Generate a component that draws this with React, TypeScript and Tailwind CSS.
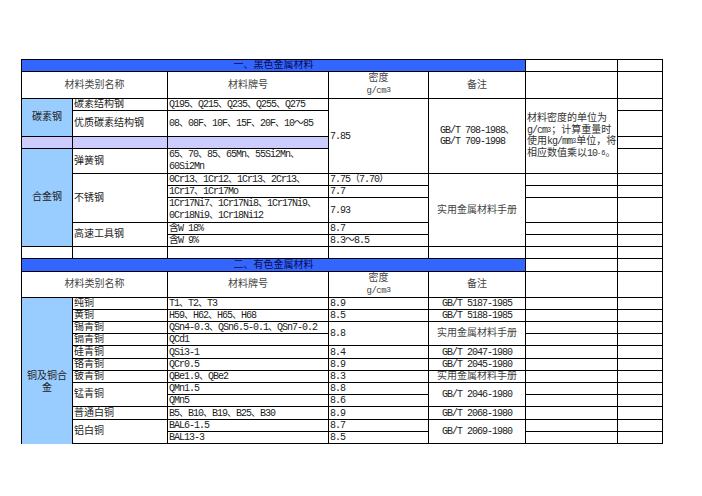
import React from "react";

const B = "border-r border-b border-black flex items-center overflow-hidden whitespace-nowrap";
const L = B + " justify-start pl-[1px]";
const LT = B + " justify-start pl-[1px] tracking-[-1px]";
const CT = B + " justify-center tracking-[-1px]";
const CC = B + " justify-center";
const E = "border-r border-b border-black";

function Header({ title }: { title: string }) {
  return (
    <>
      <div className={B + " col-span-5 justify-center bg-[#3366ff] text-[#0a0a50]"}>{title}</div>
      <div className={E}></div>
      <div className={E}></div>
      <div className={CC + " col-span-2 text-[#444]"}>材料类别名称</div>
      <div className={CC + " text-[#444]"}>材料牌号</div>
      <div className={B + " flex-col justify-center text-[#444] leading-[12px]"}>
        <span>密度</span>
        <span className="text-[9px] tracking-[-0.5px]">
          g/cm<sup className="text-[8px] relative -top-[1px]">3</sup>
        </span>
      </div>
      <div className={CC + " text-[#444]"}>备注</div>
      <div className={E}></div>
      <div className={E}></div>
    </>
  );
}

export default function App() {
  return (
    <div className="w-[702px] h-[496px] bg-white overflow-hidden">
      <div
        className="ml-[21px] mt-[59px] w-fit grid grid-cols-[51px_95px_161px_100px_97px_92px_45px] grid-rows-[12px_27px_12px_26px_12px_25px_12px_12px_25px_12px_12px_12px_13px_26px_12px_12px_12px_12px_13px_12px_12px_12px_12px_13px_12px_12px] border-t border-l border-black text-[10px] leading-[11px] text-[#222] font-[family-name:'Liberation_Mono','Noto_Sans_CJK_SC',monospace]"
      >
        <Header title="一、黑色金属材料" />

        {/* R3 */}
        <div className={CC + " row-span-2 bg-[#99ccff]"}>碳素钢</div>
        <div className={L}>碳素结构钢</div>
        <div className={LT}>Q195、Q215、Q235、Q255、Q275</div>
        <div className={LT + " row-span-4"}>7.85</div>
        <div className={B + " row-span-4 justify-center tracking-[-1px]"}>
          <div className="leading-[11px] text-left">
            <div>GB/T 708-1988、</div>
            <div>GB/T 709-1998</div>
          </div>
        </div>
        <div className={B + " row-span-4 justify-start pl-[1px] whitespace-normal"}>
          <div className="leading-[11.5px] text-[#333]">
            <div>材料密度的单位为</div>
            <div>
              <span className="tracking-[-1px]">g/cm</span>
              <sup className="text-[7px] relative -top-[1px]">3</sup>；计算重量时
            </div>
            <div>
              使用<span className="tracking-[-1px]">kg/mm</span>
              <sup className="text-[7px] relative -top-[1px]">3</sup>单位，将
            </div>
            <div>
              相应数值乘以<span className="tracking-[-1px]">10</span>
              <sup className="text-[7px] relative -top-[1px]">-6</sup>。
            </div>
          </div>
        </div>
        <div className={E}></div>

        {/* R4 */}
        <div className={L}>优质碳素结构钢</div>
        <div className={LT}>08、08F、10F、15F、20F、10～85</div>
        <div className={E}></div>

        {/* R5 */}
        <div className={E + " bg-[#ccccff]"}></div>
        <div className={E + " bg-[#ccccff]"}></div>
        <div className={E + " bg-[#ccccff]"}></div>
        <div className={E}></div>

        {/* R6 */}
        <div className={CC + " row-span-6 bg-[#99ccff]"}>合金钢</div>
        <div className={L}>弹簧钢</div>
        <div className={B + " justify-start pl-[1px] tracking-[-1px]"}>
          <div className="leading-[12px]">
            <div>65、70、85、65Mn、55Si2Mn、</div>
            <div>60Si2Mn</div>
          </div>
        </div>
        <div className={E}></div>

        {/* R7 */}
        <div className={L + " row-span-3"}>不锈钢</div>
        <div className={LT}>0Cr13、1Cr12、1Cr13、2Cr13、</div>
        <div className={LT}>7.75（7.70）</div>
        <div className={CC + " row-span-5 text-[#444]"}>实用金属材料手册</div>
        <div className={E}></div>
        <div className={E}></div>

        {/* R8 */}
        <div className={LT}>1Cr17、1Cr17Mo</div>
        <div className={LT}>7.7</div>
        <div className={E}></div>
        <div className={E}></div>

        {/* R9 */}
        <div className={B + " justify-start pl-[1px] tracking-[-1px]"}>
          <div className="leading-[12px]">
            <div>1Cr17Ni7、1Cr17Ni8、1Cr17Ni9、</div>
            <div>0Cr18Ni9、1Cr18Ni12</div>
          </div>
        </div>
        <div className={LT}>7.93</div>
        <div className={E}></div>
        <div className={E}></div>

        {/* R10 */}
        <div className={L + " row-span-2"}>高速工具钢</div>
        <div className={LT}>含W 18%</div>
        <div className={LT}>8.7</div>
        <div className={E}></div>
        <div className={E}></div>

        {/* R11 */}
        <div className={LT}>含W 9%</div>
        <div className={LT}>8.3～8.5</div>
        <div className={E}></div>
        <div className={E}></div>

        {/* R12 */}
        <div className={E}></div>
        <div className={E}></div>
        <div className={E}></div>
        <div className={E}></div>
        <div className={E}></div>
        <div className={E}></div>
        <div className={E}></div>

        <Header title="二、有色金属材料" />

        {/* R15 */}
        <div className="row-span-12 border-r border-black bg-[#99ccff] flex flex-col items-center justify-center pt-[24px] leading-[12px]">
          <span>铜及铜合</span>
          <span>金</span>
        </div>
        <div className={L}>纯铜</div>
        <div className={LT}>T1、T2、T3</div>
        <div className={LT}>8.9</div>
        <div className={CT}>GB/T 5187-1985</div>
        <div className={E}></div>
        <div className={E}></div>

        {/* R16 */}
        <div className={L}>黄铜</div>
        <div className={LT}>H59、H62、H65、H68</div>
        <div className={LT}>8.5</div>
        <div className={CT}>GB/T 5188-1985</div>
        <div className={E}></div>
        <div className={E}></div>

        {/* R17 */}
        <div className={L}>锡青铜</div>
        <div className={LT}>QSn4-0.3、QSn6.5-0.1、QSn7-0.2</div>
        <div className={LT + " row-span-2"}>8.8</div>
        <div className={CC + " row-span-2 text-[#444]"}>实用金属材料手册</div>
        <div className={E}></div>
        <div className={E}></div>

        {/* R18 */}
        <div className={L}>镉青铜</div>
        <div className={LT}>QCd1</div>
        <div className={E}></div>
        <div className={E}></div>

        {/* R19 */}
        <div className={L}>硅青铜</div>
        <div className={LT}>QSi3-1</div>
        <div className={LT}>8.4</div>
        <div className={CT}>GB/T 2047-1980</div>
        <div className={E}></div>
        <div className={E}></div>

        {/* R20 */}
        <div className={L}>铬青铜</div>
        <div className={LT}>QCr0.5</div>
        <div className={LT}>8.9</div>
        <div className={CT}>GB/T 2045-1980</div>
        <div className={E}></div>
        <div className={E}></div>

        {/* R21 */}
        <div className={L}>铍青铜</div>
        <div className={LT}>QBe1.9、QBe2</div>
        <div className={LT}>8.3</div>
        <div className={CC + " text-[#444]"}>实用金属材料手册</div>
        <div className={E}></div>
        <div className={E}></div>

        {/* R22 */}
        <div className={L + " row-span-2"}>锰青铜</div>
        <div className={LT}>QMn1.5</div>
        <div className={LT}>8.8</div>
        <div className={CT + " row-span-2"}>GB/T 2046-1980</div>
        <div className={E}></div>
        <div className={E}></div>

        {/* R23 */}
        <div className={LT}>QMn5</div>
        <div className={LT}>8.6</div>
        <div className={E}></div>
        <div className={E}></div>

        {/* R24 */}
        <div className={L}>普通白铜</div>
        <div className={LT}>B5、B10、B19、B25、B30</div>
        <div className={LT}>8.9</div>
        <div className={CT}>GB/T 2068-1980</div>
        <div className={E}></div>
        <div className={E}></div>

        {/* R25 */}
        <div className={L + " row-span-2"}>铝白铜</div>
        <div className={LT}>BAL6-1.5</div>
        <div className={LT}>8.7</div>
        <div className={CT + " row-span-2"}>GB/T 2069-1980</div>
        <div className={E}></div>
        <div className={E}></div>

        {/* R26 */}
        <div className={LT}>BAL13-3</div>
        <div className={LT}>8.5</div>
        <div className={E}></div>
        <div className={E}></div>
      </div>
    </div>
  );
}
